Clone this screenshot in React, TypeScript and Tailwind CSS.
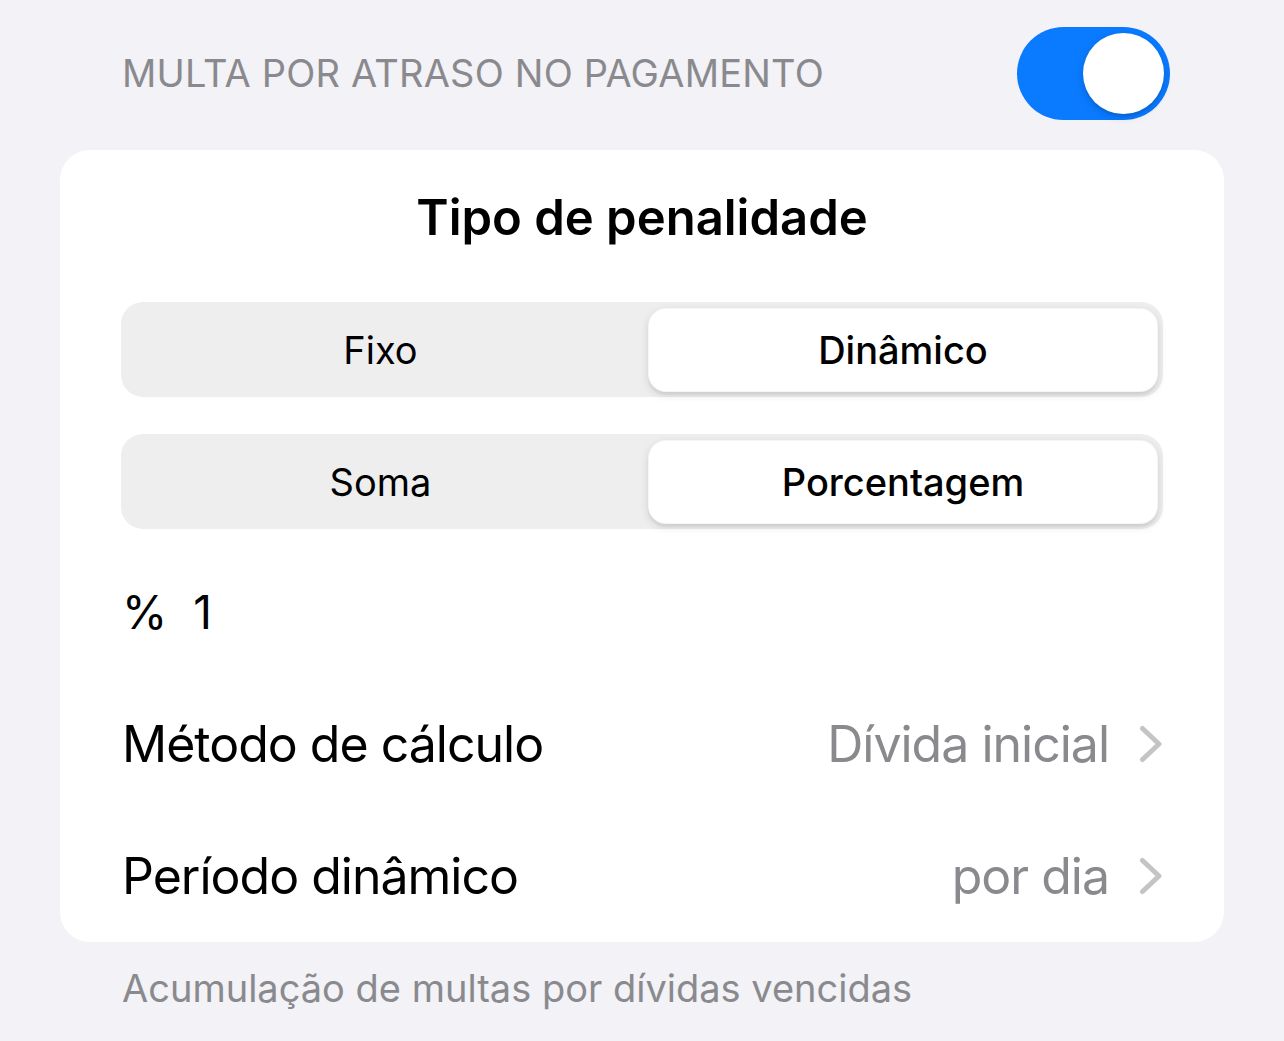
import React from "react";

function Chevron() {
  return (
    <svg width="24" height="38" viewBox="0 0 24 38" fill="none" className="shrink-0">
      <path d="M3.5 3.5 L20 19 L3.5 34.5" stroke="#c4c4c7" strokeWidth="5" strokeLinecap="round" strokeLinejoin="round" />
    </svg>
  );
}

function Segmented({ left, right }: { left: string; right: string }) {
  return (
    <div className="flex h-[95px] rounded-[22px] bg-[#eeeeef] pr-[5px] pt-[6px] pb-[5px]">
      <div className="flex flex-1 items-center justify-center pr-[8px] text-[38px] font-normal text-black">{left}</div>
      <div className="flex w-[510px] items-center justify-center rounded-[18px] border border-black/[0.04] bg-white text-[38px] font-medium text-black shadow-[0_3px_1px_rgba(0,0,0,0.04),0_3px_8px_rgba(0,0,0,0.12)]">
        {right}
      </div>
    </div>
  );
}

function Row({ label, value }: { label: string; value: string }) {
  return (
    <div className="flex h-[132px] items-center justify-between">
      <span className="text-[50px] tracking-[-1px] text-black">{label}</span>
      <div className="flex items-center gap-[30px]">
        <span className="text-[50px] tracking-[-1px] text-[#8a8a8e]">{value}</span>
        <Chevron />
      </div>
    </div>
  );
}

export default function App() {
  return (
    <div
      className="min-h-[1041px] w-full bg-[#f2f2f7] px-[60px] pt-[27px]"
      style={{ fontFamily: "Inter, 'Noto Sans', sans-serif" }}
    >
      <div className="flex items-center justify-between pl-[62px] pr-[54px]">
        <span className="text-[38px] tracking-[0.2px] text-[#8a8a8e]">MULTA POR ATRASO NO PAGAMENTO</span>
        <div className="flex h-[93px] w-[153px] items-center justify-end rounded-full bg-[#0a7aff] px-[6px]">
          <div className="h-[81px] w-[81px] rounded-full bg-white shadow-[0_3px_8px_rgba(0,0,0,0.15),0_3px_1px_rgba(0,0,0,0.06)]" />
        </div>
      </div>

      <div className="mt-[30px] flex h-[792px] flex-col rounded-[30px] bg-white px-[61px] pt-[34px]">
        <div className="flex h-[68px] items-center justify-center text-[49px] font-semibold text-black">
          Tipo de penalidade
        </div>
        <div className="mt-[50px]">
          <Segmented left="Fixo" right="Dinâmico" />
        </div>
        <div className="mt-[37px]">
          <Segmented left="Soma" right="Porcentagem" />
        </div>
        <div className="mt-[44px] flex h-[80px] items-center gap-[26px] pl-[1px] text-[46px] text-black">
          <span>%</span>
          <span>1</span>
        </div>
        <div className="mt-[26px] pl-[1px]">
          <Row label="Método de cálculo" value="Dívida inicial" />
          <Row label="Período dinâmico" value="por dia" />
        </div>
      </div>

      <div className="mt-[26px] pl-[62px] text-[38px] leading-[40px] text-[#8a8a8e]">
        Acumulação de multas por dívidas vencidas
      </div>
    </div>
  );
}
